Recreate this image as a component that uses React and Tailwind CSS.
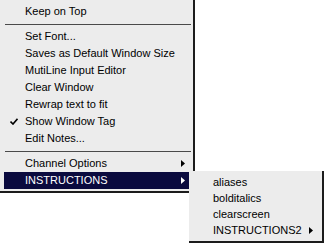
const font = { fontFamily: '"Liberation Sans", Arial, sans-serif' };

const mainItems = [
  { label: 'Keep on Top' },
  { sep: true },
  { label: 'Set Font...' },
  { label: 'Saves as Default Window Size' },
  { label: 'MutiLine Input Editor' },
  { label: 'Clear Window' },
  { label: 'Rewrap text to fit' },
  { label: 'Show Window Tag', checked: true },
  { label: 'Edit Notes...' },
  { sep: true },
  { label: 'Channel Options', sub: true },
  { label: 'INSTRUCTIONS', sub: true, active: true },
];

const subItems = [
  { label: 'aliases' },
  { label: 'bolditalics' },
  { label: 'clearscreen' },
  { label: 'INSTRUCTIONS2', sub: true },
];

function Arrow({ white }) {
  return (
    <svg width="4" height="7" viewBox="0 0 4 7" className="shrink-0">
      <polygon points="0,0 4,3.5 0,7" fill={white ? '#ffffff' : '#000000'} />
    </svg>
  );
}

function Check() {
  return (
    <svg width="8" height="7" viewBox="0 0 8 7">
      <path d="M0.5 3.5 L3 6 L7.5 0.8" stroke="#000" strokeWidth="1.6" fill="none" />
    </svg>
  );
}

export default function App() {
  return (
    <div className="relative w-[324px] h-[246px] bg-white overflow-hidden text-[11px] leading-none" style={font}>
      {/* main menu */}
      <div className="w-[195px] bg-[#ececec] border-r-2 border-b-2 border-[#1c1c1c] pt-[3px] pb-[2px] pl-[4px] pr-[4px]">
        {mainItems.map((it, i) =>
          it.sep ? (
            <div key={i} className="h-[8px] flex items-center ml-[1px] -mr-[2px]">
              <div className="w-full h-px bg-[#4a4a4a]" />
            </div>
          ) : (
            <div
              key={i}
              className={`h-[17px] flex items-center pr-[4px] ${
                it.active ? 'bg-[#0a0a3e] text-white' : 'text-black'
              }`}
            >
              <div className="w-[21px] pl-[6px] flex items-center">{it.checked && <Check />}</div>
              <span className="flex-1">{it.label}</span>
              {it.sub && <Arrow white={it.active} />}
            </div>
          )
        )}
      </div>

      {/* INSTRUCTIONS flyout */}
      <div className="absolute left-[189px] top-[171px] w-[135px] bg-[#ececec] border-r-2 border-b-2 border-[#1c1c1c] pt-[3px] pb-[3px]">
        {subItems.map((it, i) => (
          <div key={i} className="h-[16px] flex items-center pl-[24px] pr-[9px] text-black">
            <span className="flex-1">{it.label}</span>
            {it.sub && <Arrow />}
          </div>
        ))}
      </div>
    </div>
  );
}
